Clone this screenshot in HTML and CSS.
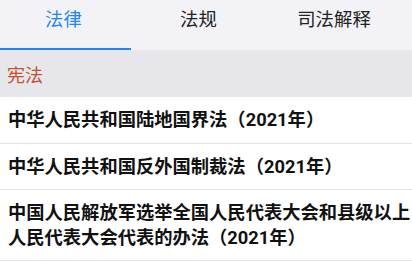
FILE: index.html
```html
<!DOCTYPE html>
<html lang="zh-CN">
<head>
<meta charset="utf-8">
<link rel="stylesheet" href="styles.css">
</head>
<body>
<div class="tabs">
  <div class="tab tab-first active"><span>法律</span></div>
  <div class="tab"><span>法规</span></div>
  <div class="tab"><span>司法解释</span></div>
</div>
<div class="section">宪法</div>
<ul class="list">
  <li class="row">中华人民共和国陆地国界法（2021年）</li>
  <li class="row">中华人民共和国反外国制裁法（2021年）</li>
  <li class="row">中国人民解放军选举全国人民代表大会和县级以上人民代表大会代表的办法（2021年）</li>
</ul>
</body>
</html>
```
FILE: styles.css
```css
* { box-sizing: border-box; }
html, body { margin: 0; padding: 0; }
body {
  width: 412px;
  height: 264px;
  overflow: hidden;
  background: #ffffff;
  font-family: "Roboto", "Noto Sans CJK SC", sans-serif;
  color: #111;
}
.tabs {
  display: grid;
  grid-template-columns: 131px 135px 136px;
  height: 50px;
  background: #f2f2f7;
}
.tab {
  display: flex;
  align-items: center;
  justify-content: center;
  padding-bottom: 12px;
  font-size: 18.4px;
  color: #222;
  border-bottom: 2px solid transparent;
}
.tab-first { padding-right: 4px; }
.tab.active {
  color: #2288f0;
  border-bottom-color: #1f86f0;
}
.section {
  height: 47px;
  background: #e6e6eb;
  color: #bf5330;
  font-size: 18px;
  display: flex;
  align-items: center;
  padding-left: 7px;
}
.list {
  list-style: none;
  margin: 0;
  padding: 0;
}
.row {
  padding: 10px 0 10px 8px;
  font-size: 18.3px;
  font-weight: bold;
  line-height: 25px;
  border-bottom: 1px solid #e3e3e6;
  color: #111;
}
.row:first-child { padding-top: 10px; padding-bottom: 11px; }
.row:nth-child(2) { padding-top: 10px; padding-bottom: 10px; }
```
